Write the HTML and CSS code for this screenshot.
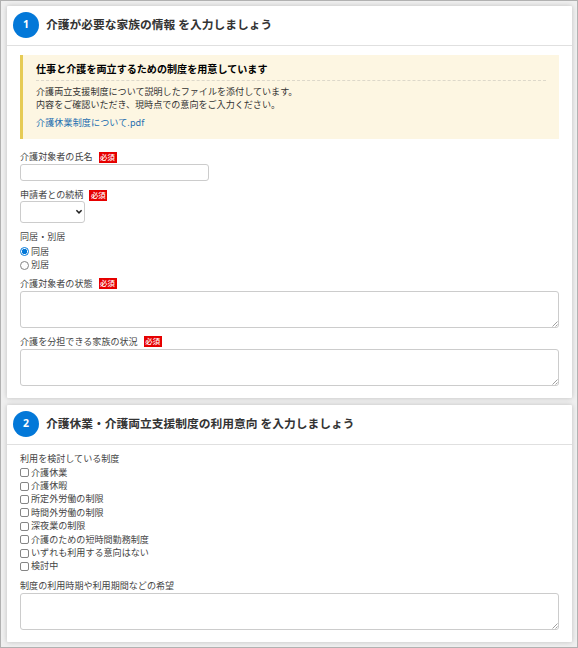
FILE: index.html
```
<!DOCTYPE html>
<html lang="ja">
<head>
    <meta charset="UTF-8">
    <meta name="viewport" content="width=device-width, initial-scale=1.0">
    <title>介護に関する情報の入力</title>
    <link rel="stylesheet" href="styles.css">
</head>
<body>
    <form class="page">
        <!-- Step 1 -->
        <section class="card card-family">
            <div class="card-header">
                <span class="step">1</span>
                <h2>介護が必要な家族の情報 を入力しましょう</h2>
            </div>
            <div class="card-body">
                <div class="notice">
                    <h3>仕事と介護を両立するための制度を用意しています</h3>
                    <p>介護両立支援制度について説明したファイルを添付しています。<br>内容をご確認いただき、現時点での意向をご入力ください。</p>
                    <a href="#">介護休業制度について.pdf</a>
                </div>

                <div class="form-group group-name">
                    <label class="title" for="name">介護対象者の氏名<span class="required">必須</span></label>
                    <input type="text" id="name" class="text-input">
                </div>
                <div class="form-group group-relation">
                    <label class="title" for="relation">申請者との続柄<span class="required">必須</span></label>
                    <div class="select-box">
                        <select id="relation"><option></option></select>
                        <svg class="arrow" viewBox="0 0 8 6"><path d="M1.4 1.3 L4 3.9 L6.6 1.3"/></svg>
                    </div>
                </div>
                <div class="form-group group-living">
                    <div class="title">同居・別居</div>
                    <label class="option"><input type="radio" name="living" checked>同居</label>
                    <label class="option"><input type="radio" name="living">別居</label>
                </div>
                <div class="form-group group-condition">
                    <label class="title" for="condition">介護対象者の状態<span class="required">必須</span></label>
                    <div class="area-box">
                        <textarea id="condition"></textarea>
                        <svg class="grip" viewBox="0 0 6 6"><path d="M0.5 5.5 L5.5 0.5 M3.5 5.5 L5.5 3.5"/></svg>
                    </div>
                </div>
                <div class="form-group group-share">
                    <label class="title" for="share">介護を分担できる家族の状況<span class="required">必須</span></label>
                    <div class="area-box">
                        <textarea id="share"></textarea>
                        <svg class="grip" viewBox="0 0 6 6"><path d="M0.5 5.5 L5.5 0.5 M3.5 5.5 L5.5 3.5"/></svg>
                    </div>
                </div>
            </div>
        </section>

        <!-- Step 2 -->
        <section class="card card-plan">
            <div class="card-header">
                <span class="step">2</span>
                <h2>介護休業・介護両立支援制度の利用意向 を入力しましょう</h2>
            </div>
            <div class="card-body">
                <div class="form-group group-system">
                    <div class="title">利用を検討している制度</div>
                    <label class="option"><input type="checkbox">介護休業</label>
                    <label class="option"><input type="checkbox">介護休暇</label>
                    <label class="option"><input type="checkbox">所定外労働の制限</label>
                    <label class="option"><input type="checkbox">時間外労働の制限</label>
                    <label class="option"><input type="checkbox">深夜業の制限</label>
                    <label class="option"><input type="checkbox">介護のための短時間勤務制度</label>
                    <label class="option"><input type="checkbox">いずれも利用する意向はない</label>
                    <label class="option"><input type="checkbox">検討中</label>
                </div>
                <div class="form-group group-hope">
                    <label class="title" for="hope">制度の利用時期や利用期間などの希望</label>
                    <div class="area-box">
                        <textarea id="hope"></textarea>
                        <svg class="grip" viewBox="0 0 6 6"><path d="M0.5 5.5 L5.5 0.5 M3.5 5.5 L5.5 3.5"/></svg>
                    </div>
                </div>
            </div>
        </section>
    </form>
</body>
</html>
```

FILE: styles.css
```
/* Reset CSS */
* {
    margin: 0;
    padding: 0;
    box-sizing: border-box;
}

body {
    font-family: "Noto Sans", "Noto Sans CJK JP", sans-serif;
    font-size: 9.07px;
    line-height: 12px;
    color: #444;
}

.page {
    display: flex;
    flex-direction: column;
    gap: 7px;
    height: 648px;
    padding: 5px 5px 5px 6px;
    border: 1px solid #b1b1b1;
    background: #efefef;
    overflow: hidden;
}

/* Cards */
.card {
    background: #fff;
    border-radius: 1px;
    box-shadow: 0 0 5px rgba(0, 0, 0, 0.2);
}

.card-family {
    height: 392px;
}

.card-plan {
    height: 237px;
}

.card-header {
    display: flex;
    align-items: center;
    gap: 7px;
    height: 40px;
    padding: 0 6px 1px;
    border-bottom: 1px solid #e0e0e0;
}

.step {
    width: 26px;
    height: 26px;
    border-radius: 50%;
    background: #0378d8;
    color: #fff;
    font-size: 10.5px;
    font-weight: bold;
    line-height: 25px;
    text-align: center;
}

.card-header h2 {
    padding-bottom: 3px;
    font-size: 11.75px;
    line-height: 18px;
    color: #333;
}

.card-body {
    padding: 9px 13px 0;
}

/* Notice */
.notice {
    height: 84px;
    padding: 7px 13px 0;
    border-left: 3px solid #e6cb55;
    background: #fdf6e2;
}

.notice h3 {
    height: 19px;
    margin-bottom: 5px;
    border-bottom: 1px dashed #ddd8ca;
    font-size: 10.08px;
    line-height: 15px;
    color: #000;
}

.notice p {
    margin-bottom: 6px;
    line-height: 12.5px;
    color: #333;
}

.notice a {
    display: block;
    color: #1d6fb0;
    letter-spacing: 0.1px;
    text-decoration: none;
}

/* Form */
.title {
    display: flex;
    align-items: center;
    height: 12px;
}

.required {
    width: 18px;
    height: 11px;
    margin-left: 6px;
    background: #e60000;
    color: #fff;
    font-size: 7.4px;
    font-weight: 500;
    line-height: 11px;
    text-align: center;
}

.group-name {
    margin-top: 12px;
}

.group-relation {
    margin-top: 8px;
}

.group-living {
    margin-top: 8px;
}

.group-living .title {
    margin-bottom: 2px;
}

.group-condition {
    margin-top: 6px;
}

.group-share {
    margin-top: 8px;
}

.group-system .title {
    margin: -1px 0 1px;
}

.group-hope {
    margin-top: 7px;
}

.text-input,
select,
textarea {
    display: block;
    border: 1px solid #ccc;
    border-radius: 3px;
    background: #fff;
    font: inherit;
    outline: none;
}

.text-input {
    width: 189px;
    height: 17px;
    margin-top: 1px;
}

.select-box,
.area-box {
    position: relative;
}

.select-box {
    width: 65px;
}

select {
    width: 65px;
    height: 22px;
    appearance: none;
}

.arrow {
    position: absolute;
    right: 2px;
    top: 8px;
    width: 8px;
    height: 6px;
    fill: none;
    stroke: #222;
    stroke-width: 1.5;
}

textarea {
    width: 100%;
    height: 37px;
    margin-top: 1px;
    resize: none;
}

.grip {
    position: absolute;
    right: 1px;
    bottom: 1px;
    width: 6px;
    height: 6px;
    fill: none;
    stroke: #888;
    stroke-width: 0.8;
}

.option {
    display: flex;
    align-items: center;
    gap: 2px;
    height: 13.4px;
}

.option input {
    appearance: none;
    width: 9px;
    height: 9px;
    border: 1px solid #858585;
    border-radius: 2px;
    background: #fff;
}

.option input[type="radio"] {
    border-radius: 50%;
}

.option input[type="radio"]:checked {
    border-color: #0378d8;
    background: radial-gradient(circle, #0378d8 2.4px, #fff 3px);
}
```
